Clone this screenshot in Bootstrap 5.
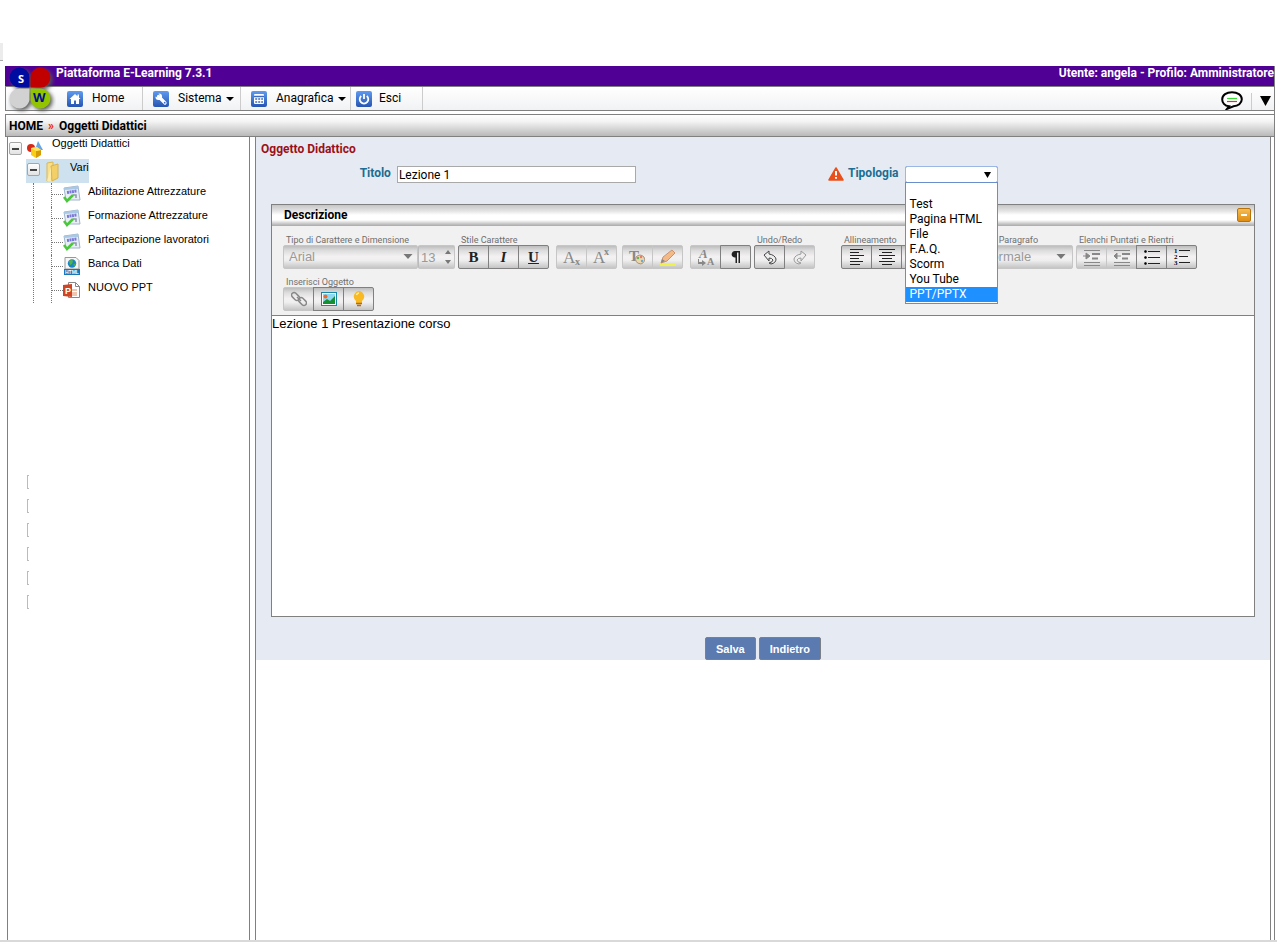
<!DOCTYPE html>
<html lang="it">
<head>
<meta charset="utf-8">
<meta name="viewport" content="width=device-width, initial-scale=1">
<title>Piattaforma E-Learning 7.3.1</title>
<link href="https://cdn.jsdelivr.net/npm/bootstrap@5.3.0/dist/css/bootstrap.min.css" rel="stylesheet">
<style>
:root{--line:#808080;--arial:"Liberation Sans",Arial,sans-serif}
body{font-family:Roboto,"Liberation Sans",sans-serif;font-size:12px;line-height:16px;color:#000;background:#fff}
a{color:inherit;text-decoration:none}
svg{display:block;flex:none}
.topspace{height:66px;padding-top:43px}
.tabstub{width:3px;height:18px;background:#ececec;border-bottom:1px solid #aaa}
.app{margin:0 2px 0 5px;border-right:1px solid var(--line)}
.brandbar{height:21px;background:#500094;color:#fff;border-bottom:1px solid var(--line);padding-left:51px;line-height:14px}
.logo{position:absolute;left:3px;top:0}
.menubar{height:24px;background:linear-gradient(#fff,#f1f2f4);border-left:1px solid var(--line);border-bottom:1px solid var(--line);padding-left:51px}
.menubar .entry{border-right:1px solid #ccc;padding-left:10px;gap:9px;white-space:nowrap}
.w-home{width:86px}.w-sist{width:98px}.w-anag{width:110px}
.menubar .w-esci{width:72px;padding-left:5px;gap:7px}
.entry span{padding-bottom:2px}
.drop::after{content:"";display:inline-block;border:4px solid transparent;border-top-color:#000;border-bottom:0;margin-left:4px;vertical-align:1px}
.tools{gap:8px;padding-right:3px}
.tools .bar{width:1px;height:17px;background:#ccc}
.plain{border:0;background:none;padding:0}
.crumbs{margin-top:3px;height:23px;border:1px solid var(--line);border-right:0;background:linear-gradient(#fff,#f4f4f4 30%,#b9b9b9);padding-left:3px;gap:5px;line-height:22px}
.crumbs .sep{color:#f01818}
.tree{width:243px;margin-left:2px;border:solid var(--line);border-width:0 1px;font-family:var(--arial);font-size:11px}
.node{height:24px;white-space:nowrap}
.node.first{height:22px;margin-left:1px}
.node.first>*{margin-top:-2px}
.picked{background:#cde1ef;margin-left:18px;padding-left:1px;width:63px}
.picked .knob{padding-bottom:7px}
.toggle{width:13px;height:13px;border:1px solid #a6a6a6;border-radius:2px;background:linear-gradient(#fff,#e2e2e2);padding:0}
.toggle::before{content:"";display:block;width:7px;height:2px;background:#444;margin:0 auto}
.pic{margin:0 7px 0 4px}
.leaf{padding-left:25px}
.guide{width:18px;border-left:1px dotted #777}
.stub{width:12px;border-left:1px dotted #777}
.stub::after{content:"";display:block;margin-top:11px;border-top:1px dotted #777}
.leaf svg{margin:2px 7px 0 0}
.ticks{margin-top:172px;padding-left:19px}
.tick{height:14px;width:2px;margin-bottom:10px;border:1px solid #bbb;border-right:0}
.work{margin:0 3px 0 5px;border:solid var(--line);border-width:0 1px}
.form-zone{background:#e6ebf3}
.form-zone h1{font-size:12px;line-height:16px;color:#9c1018;padding:4px 0 0 5px}
.fields{padding-top:9px;height:47px}
.fields label{color:#1b6d92;line-height:15px}
.fields .cap{width:27%;padding-right:2px}
.txt{width:239px;height:17px;border:1px solid #a9a9a9;padding:0 1px;font-size:12px;line-height:15px;color:#000;border-radius:0}
.kind{padding-left:65px}
.kind label{margin:0 6px 0 4px}
.picker{width:93px}
.picker select{appearance:none;width:100%;height:17px;border:1px solid #6a8ecb;border-radius:2px;outline:1px solid #9bb8e5;outline-offset:-1px;background:#fff}
.picker>svg{position:absolute;right:7px;top:6px;pointer-events:none}
.choices{position:absolute;left:0;right:0;top:16px;z-index:5;background:#fff;border:1px solid #6a8ecb;margin:0;padding:0 0 1px;list-style:none}
.choices li{height:15px;line-height:14px;padding-left:4px}
.choices li:first-child{height:14px}
.choices .on{background:#1e90ff;color:#fff}
.editor{margin:0 15px;border:1px solid var(--line)}
.ed-head{height:21px;background:linear-gradient(#c6c6c6,#e4e4e4 30%,#fff 50%,#fff 75%,#b5b5b5);border-bottom:1px solid #b0b0b0;padding:0 3px 0 12px}
.min{width:14px;height:14px;border:1px solid #b8720a;border-radius:2px;background:linear-gradient(#f6bd55,#e08e10);padding:0}
.min::before{content:"";display:block;width:6px;height:2px;background:#fff;margin:0 auto}
.kit{background:#f1f1f1;border-bottom:1px solid var(--line);padding:9px 4px 4px 11px;column-gap:3px;row-gap:8px}
.cap9{font-size:9px;line-height:10px;color:#6e6e6e;padding-left:3px;white-space:nowrap}
.tb,.fake,.size{height:24px;border:1px solid var(--line);background:linear-gradient(#bdbdbd,#dedede 22%,#f4f1f2 48%,#efefef 65%,#c4c4c4)}
.tb{width:31px;padding:0;margin-right:-1px;display:flex;align-items:center;justify-content:center;position:relative;color:#222}
.tb:not(:disabled){z-index:1}
.tb:first-child{border-radius:2px 0 0 2px}.tb:last-child{border-radius:0 2px 2px 0;margin-right:0}
.tb:disabled{border-color:#c6c6c6;color:#8b8b8b}
.tb,.tb text{font-family:"Liberation Serif",serif}
.tb b,.tb i,.tb u{font-size:15px;font-weight:bold;line-height:20px}
.fake,.size{border-color:#c6c6c6;font-family:var(--arial);font-size:13px;color:#999;opacity:1;appearance:none;border-radius:2px}
.fake{padding:0 5px}
.size{width:37px;padding:0 2px;border-left-color:#bbb}
.w-font{width:135px}.w-par{width:97px}
.arrow{position:absolute;right:5px;top:9px}
.sp-s{margin-left:2px}.sp-m{margin-left:11px}.sp-l{margin-left:23px}
.body-text{display:block;width:100%;height:300px;border:0;padding:0;resize:none;font-family:var(--arial);font-size:13px;line-height:16px;color:#000}
.actions{padding-top:20px;gap:3px}
.act{height:23px;border:1px solid #7c7f86;border-radius:2px;background:#5b7ab0;color:#fff;font-family:var(--arial);font-size:11px;line-height:20px;font-weight:bold;padding:0 10px}
.foot{height:4px;border-top:2px solid #d9d9d9}
</style>
</head>
<body class="min-vh-100 d-flex flex-column">
<svg width="0" height="0" class="position-absolute" aria-hidden="true">
<defs>
<linearGradient id="blue" x2="0" y2="1"><stop stop-color="#5f9bf0"/><stop offset="1" stop-color="#2754b0"/></linearGradient>
<symbol id="scorm" viewBox="0 0 18 18"><path d="M1 3 15 1 17 15 3 15Z" fill="#e7eef6" stroke="#9fb6cc"/><path d="M1 3 15 1 15.500 4 1.500 5Z" fill="#a9c8e4"/><path d="M4 7.500 14 6" stroke="#7a78d8" stroke-width="3" stroke-dasharray="2 .5"/><path d="M10 10h3v3" fill="none" stroke="#8a98a8" stroke-width="1.500"/><path d="m1 12 3 4 6-6" fill="none" stroke="#4cc63c" stroke-width="2.500"/></symbol>
<symbol id="down" viewBox="0 0 9 5"><path d="M0 0h9L4.500 5Z"/></symbol>
</defs></svg>

<div class="topspace"><div class="tabstub"></div></div>
<div class="app flex-grow-1 d-flex flex-column">
<header class="position-relative">
<div class="brandbar d-flex justify-content-between fw-bold"><span>Piattaforma E-Learning 7.3.1</span><span>Utente: angela - Profilo: Amministratore</span></div>
<a href="#" class="logo" aria-label="SW"><svg width="48" height="48" viewBox="0 0 48 48"><g style="filter:drop-shadow(2px 2px 2px #555)">
<path d="M21.500 21.500h-9a10 10 0 1 1 9-10Z" fill="#000ca0"/><path d="M22.500 21.500v-9a10 10 0 1 1 10 9Z" fill="#c00000"/>
<path d="M21.500 22.500v9a10 10 0 1 1-9-9Z" fill="#d2d2d2"/><path d="M22.500 22.500h9a10 10 0 1 1-9 9Z" fill="#93c400"/></g>
<text x="10" y="17" font-size="11" font-weight="bold" fill="#fff" font-family="Open Sans,sans-serif">S</text><text x="25" y="36" font-size="13" font-weight="bold" fill="#00108c" font-family="Open Sans,sans-serif">W</text></svg></a>
<nav class="menubar d-flex">
<a href="#" class="entry w-home d-flex align-items-center"><svg width="16" height="16" viewBox="0 0 16 16"><rect width="16" height="16" rx="2" fill="url(#blue)"/><path d="M2.500 8 8 3l2.500 2.200V3.500H12v3L13.500 8H12v5H9V9.500H7V13H4V8Z" fill="#fff"/></svg><span>Home</span></a>
<a href="#" class="entry w-sist d-flex align-items-center"><svg width="16" height="16" viewBox="0 0 16 16"><rect width="16" height="16" rx="2" fill="url(#blue)"/><path d="M5.500 5.500 12 12" stroke="#fff" stroke-width="3.200" stroke-linecap="round"/><path d="M2.500 5.500a3.300 3.300 0 1 0 3-3l1.500 2-.5 1.500-2 .5Z" fill="#fff"/><circle cx="11.700" cy="11.700" r=".9" fill="#3867c0"/></svg><span class="drop">Sistema</span></a>
<a href="#" class="entry w-anag d-flex align-items-center"><svg width="16" height="16" viewBox="0 0 16 16"><rect width="16" height="16" rx="2" fill="url(#blue)"/><rect x="3" y="3" width="10" height="10" rx="1" fill="#fff"/><path d="M3 5.500h10M4.200 8h2M7.200 8h2M10.200 8h1.800M4.200 11h2M7.200 11h2M10.200 11h1.800" stroke="#3b6ac4" stroke-width="1.400"/></svg><span class="drop">Anagrafica</span></a>
<a href="#" class="entry w-esci d-flex align-items-center"><svg width="16" height="16" viewBox="0 0 16 16"><rect width="16" height="16" rx="2" fill="url(#blue)"/><path d="M5.200 5a4.300 4.300 0 1 0 5.600 0M8 3v5" fill="none" stroke="#fff" stroke-width="1.800"/></svg><span>Esci</span></a>
<div class="tools ms-auto d-flex align-items-end">
<button class="plain" aria-label="Messaggi"><svg width="22" height="19" viewBox="0 0 22 19"><path d="M8 15.300C3.500 15 1.200 11.500 1.200 8.500 1.200 4 5.500 1.200 11 1.200S20.800 4 20.800 8.300c0 4-3.800 6.700-8.300 7L6 17.900Z" fill="#fff" stroke="#000" stroke-width="2"/><path d="M6 7.500h10" stroke="#3d3" stroke-width="1.200"/><path d="M6 10.500h10" stroke="#d33" stroke-width="1.200"/></svg></button>
<span class="bar"></span>
<button class="plain pb-1" aria-label="Apri menu"><svg width="11" height="10"><path d="M0 0h11L5.500 10Z"/></svg></button>
</div>
</nav>
</header>
<div class="crumbs d-flex fw-bold"><a href="#">HOME</a><span class="sep">»</span><span>Oggetti Didattici</span></div>
<div class="d-flex flex-grow-1">
<aside class="tree flex-shrink-0">
<div class="node first d-flex"><span class="d-flex align-items-end pb-1"><button class="toggle" aria-label="Comprimi Oggetti Didattici"></button></span>
<span class="pic d-flex align-items-end"><svg width="19" height="19" viewBox="0 0 19 19"><path d="M12 1 17 10H9Z" fill="#65a5e8"/><circle cx="5" cy="8" r="4" fill="#d62a16"/><path d="m5 8 6-1 4 3v5l-5 3-5-3Z" fill="#f8cd17"/><path d="m10 11 5-1v5l-5 3Z" fill="#d59a05"/><path d="m5 8 5 3 5-1-4-3Z" fill="#ffe663"/></svg></span><a href="#">Oggetti Didattici</a></div>
<div class="node picked d-flex"><span class="knob d-flex align-items-end"><button class="toggle" aria-label="Comprimi Vari"></button></span>
<span class="pic d-flex align-items-end"><svg width="19" height="22" viewBox="0 0 19 22"><path d="M3 2 9 1v16l-6 3Z" fill="#f8df8c" stroke="#dcb84e"/><path d="M7 5 14 3v14l-6 3Z" fill="#f3cf68" stroke="#dbb24a"/><path d="M3 20 7 6v14Z" fill="#fdeba9"/></svg></span><a href="#">Vari</a></div>
<div class="node leaf d-flex"><i class="guide"></i><i class="stub"></i><svg width="18" height="18"><use href="#scorm"/></svg><a href="#">Abilitazione Attrezzature</a></div>
<div class="node leaf d-flex"><i class="guide"></i><i class="stub"></i><svg width="18" height="18"><use href="#scorm"/></svg><a href="#">Formazione Attrezzature</a></div>
<div class="node leaf d-flex"><i class="guide"></i><i class="stub"></i><svg width="18" height="18"><use href="#scorm"/></svg><a href="#">Partecipazione lavoratori</a></div>
<div class="node leaf d-flex"><i class="guide"></i><i class="stub"></i><svg width="18" height="18" viewBox="0 0 18 18"><path d="M2 .5h11l3 3V12H2Z" fill="#f7f7f7" stroke="#999"/><circle cx="9" cy="6.500" r="4.200" fill="#1a86c8"/><path d="M6 4q3-2 4 0l-1 3-2 1ZM10 8l3-2-1 3Z" fill="#57b53b"/><path d="M1 12h16v6H1Z" fill="#1976b9"/><text x="2" y="17" font-size="5" font-weight="bold" fill="#fff">HTML</text></svg><a href="#">Banca Dati</a></div>
<div class="node leaf d-flex"><i class="guide"></i><i class="stub"></i><svg width="18" height="18" viewBox="0 0 18 18"><path d="M5.500 1.500h7l4 4v11h-11Z" fill="#fff" stroke="#888"/><path d="M12.500 1.500v4h4" fill="none" stroke="#888"/><path d="M9 9h5M9 12h5M9 14h5" stroke="#e08a64"/><path d="M0 4 9 3v13l-9-1Z" fill="#d04423"/><text x="2" y="13" font-size="9" font-weight="bold" fill="#fff">P</text></svg><a href="#">NUOVO PPT</a></div>
<div class="ticks"><div class="tick"></div><div class="tick"></div><div class="tick"></div><div class="tick"></div><div class="tick"></div><div class="tick"></div></div>
</aside>
<main class="work flex-grow-1">
<form class="form-zone" onsubmit="return false">
<h1 class="fw-bold m-0">Oggetto Didattico</h1>
<div class="fields d-flex">
<div class="w-50 d-flex"><label for="titolo" class="cap fw-bold text-end me-1">Titolo</label><input id="titolo" class="txt" value="Lezione 1"></div>
<div class="w-50 kind d-flex"><svg width="16" height="15" viewBox="0 0 16 15"><path d="M8 2 15 14H1Z" fill="#e8501c" stroke="#e8501c" stroke-width="1.500" stroke-linejoin="round"/><path d="M8 5v4.500M8 11v1.700" stroke="#fff" stroke-width="2"/></svg><label for="tipologia" class="fw-bold">Tipologia</label>
<div class="picker position-relative"><select id="tipologia"><option></option></select><svg width="7" height="6"><path d="M0 0h7L3.500 6Z"/></svg>
<ul class="choices" role="listbox" aria-label="Tipologia"><li role="option"></li><li role="option">Test</li><li role="option">Pagina HTML</li><li role="option">File</li><li role="option">F.A.Q.</li><li role="option">Scorm</li><li role="option">You Tube</li><li role="option" class="on" aria-selected="true">PPT/PPTX</li></ul></div></div>
</div>
<section class="editor">
<div class="ed-head d-flex align-items-center justify-content-between fw-bold"><span>Descrizione</span><button class="min" aria-label="Riduci"></button></div>
<div class="kit d-flex flex-wrap align-items-end">
<div><div class="cap9">Tipo di Carattere e Dimensione</div><div class="d-flex"><div class="position-relative"><select class="fake w-font" disabled aria-label="Carattere"><option>Arial</option></select><svg class="arrow" width="10" height="5" fill="#777"><use href="#down"/></svg></div><div class="position-relative"><input class="size" value="13" disabled aria-label="Dimensione"><svg class="position-absolute end-0 top-0" style="margin:5px 2px" width="9" height="14" fill="#777"><path d="M1 4h6L4 0ZM1 10h6l-3 4Z"/></svg></div></div></div>
<div><div class="cap9">Stile Carattere</div><div class="d-flex"><button class="tb" aria-label="Grassetto"><b>B</b></button><button class="tb" aria-label="Corsivo"><i>I</i></button><button class="tb" aria-label="Sottolineato"><u>U</u></button></div></div>
<div class="ms-1 d-flex"><button class="tb" disabled aria-label="Pedice"><svg width="20" height="20" fill="#888"><text x="1" y="16" font-size="17">A</text><text x="13" y="18" font-size="10" font-weight="bold">x</text></svg></button><button class="tb" disabled aria-label="Apice"><svg width="20" height="20" fill="#888"><text x="1" y="16" font-size="17">A</text><text x="12" y="8" font-size="10" font-weight="bold">x</text></svg></button></div>
<div class="sp-s d-flex"><button class="tb" disabled aria-label="Colore testo"><svg width="20" height="20"><text x="1" y="14" font-size="15" font-weight="bold" fill="#888">T</text><path d="M8 10q4-4 8 0 2 5-3 7-7-1-5-7Z" fill="#edd6ad" stroke="#a8937a"/><circle cx="10" cy="11" r="1.200" fill="#5b5"/><circle cx="13" cy="10" r="1.200" fill="#e76"/><circle cx="14" cy="14" r="1.200" fill="#6ad"/></svg></button><button class="tb" disabled aria-label="Evidenziatore"><svg width="20" height="20"><path d="M2 18h16" stroke="#eef04d" stroke-width="2"/><path d="m3 16 2-6 9-7 3 3-8 8Z" fill="#f3b987" stroke="#c89370"/><path d="m3 16 1-4 3 2Z" fill="#888"/></svg></button></div>
<div class="ms-1 d-flex"><button class="tb" disabled aria-label="Rimuovi formato"><svg width="20" height="20" fill="#888"><text x="3" y="11" font-size="13" font-weight="bold" font-style="italic">A</text><text x="11" y="18" font-size="10" font-weight="bold">A</text><path d="M3 12v3h3v-2l4 3-4 3v-2H2v-5Z"/></svg></button><button class="tb" aria-label="Paragrafo"><svg width="12" height="14"><path d="M10 1v12H8.500V2.500H7V13H5.500V7.500a3.300 3.300 0 1 1 0-6.500Z" fill="#222"/></svg></button></div>
<div><div class="cap9">Undo/Redo</div><div class="d-flex"><button class="tb" aria-label="Annulla"><svg width="14" height="15" viewBox="0 0 14 15"><path d="m1 5 5-4v3q6 1 7 5 0 4-5 5l-2-1q4-1 4-3-1-2-4-2v3Z" fill="#eee" stroke="#444"/></svg></button><button class="tb" disabled aria-label="Ripeti"><svg width="14" height="15" viewBox="0 0 14 15"><path d="m13 5-5-4v3q-6 1-7 5 0 4 5 5l2-1q-4-1-4-3 1-2 4-2v3Z" fill="#eee" stroke="#999"/></svg></button></div></div>
<div class="sp-l"><div class="cap9">Allineamento</div><div class="d-flex"><button class="tb" aria-label="Sinistra"><svg width="16" height="18" stroke="#222"><path d="M1 1.500h13M1 4.500h9M1 7.500h14M1 10.500h9M1 13.500h13M1 16.500h10"/></svg></button><button class="tb" aria-label="Centro"><svg width="16" height="18" stroke="#222"><path d="M0 1.500h16M3 4.500h10M0 7.500h16M3 10.500h10M0 13.500h16M3 16.500h10"/></svg></button><button class="tb" aria-label="Destra"><svg width="16" height="18" stroke="#222"><path d="M2 1.500h13M6 4.500h9M1 7.500h14M6 10.500h9M2 13.500h13M5 16.500h10"/></svg></button><button class="tb" aria-label="Giustificato"><svg width="16" height="18" stroke="#222"><path d="M0 1.500h16M0 4.500h16M0 7.500h16M0 10.500h16M0 13.500h16M0 16.500h16"/></svg></button></div></div>
<div class="sp-m"><div class="cap9">Stile Paragrafo</div><div class="position-relative"><select class="fake w-par" disabled aria-label="Stile Paragrafo"><option>Normale</option></select><svg class="arrow" style="right:7px" width="10" height="5" fill="#777"><use href="#down"/></svg></div></div>
<div><div class="cap9">Elenchi Puntati e Rientri</div><div class="d-flex"><button class="tb" disabled aria-label="Aumenta rientro"><svg width="18" height="17" fill="none" stroke="#888"><path d="M1 1.500h16M1 13.500h16M1 16.500h16"/><path d="M9 5h8M9 9.500h6" stroke-width="2"/><path d="M0 7h3V4l4 3-4 3V7" fill="#888"/></svg></button><button class="tb" disabled aria-label="Riduci rientro"><svg width="18" height="17" fill="none" stroke="#888"><path d="M1 1.500h16M1 13.500h16M1 16.500h16"/><path d="M9 5h8M9 9.500h6" stroke-width="2"/><path d="M8 7H4V4L1 7l3 3V7" fill="#888"/></svg></button><button class="tb" aria-label="Elenco puntato"><svg width="18" height="17" stroke="#222"><path d="M5 2.500h12M5 8.500h12M5 14.500h12"/><circle cx="2.500" cy="2.500" r="1"/><circle cx="2.500" cy="8.500" r="1"/><circle cx="2.500" cy="14.500" r="1"/></svg></button><button class="tb" aria-label="Elenco numerato"><svg width="18" height="20"><path d="M6 3.500h11M6 9.500h9M6 15.500h11" stroke="#222"/><text x="1" y="6" font-size="7" font-weight="bold">1</text><text x="1" y="12" font-size="7" font-weight="bold">2</text><text x="1" y="18" font-size="7" font-weight="bold">3</text></svg></button></div></div>
<div><div class="cap9">Inserisci Oggetto</div><div class="d-flex"><button class="tb" disabled aria-label="Collegamento"><svg width="16" height="16" fill="none" stroke="#888" stroke-width="1.500"><rect x="0" y="3" width="9" height="5" rx="2.500" transform="rotate(45 4.500 5.500)"/><rect x="7" y="8" width="9" height="5" rx="2.500" transform="rotate(45 11.500 10.500)"/><path d="m6 6 4 4"/></svg></button><button class="tb" aria-label="Immagine"><svg width="16" height="14"><rect x=".5" y=".5" width="15" height="13" fill="#fff" stroke="#1688a8"/><path d="M2 2h12v10H2Z" fill="#8fd8f4"/><path d="m2 10 4-3 3 2 5-5v8H2Z" fill="#159030"/><circle cx="4.500" cy="4.500" r="2" fill="#f26a21"/></svg></button><button class="tb" aria-label="Suggerimento"><svg width="12" height="16"><path d="M3 10Q0 7 1 4q2-4 5-4t5 4q1 3-2 6v2H3Z" fill="#f8b922"/><path d="M3.500 4Q4 2 6 2" stroke="#fff3a8" stroke-width="1.500" fill="none"/><path d="M3 12.500h6M4 14.500h4" stroke="#b86c10" stroke-width="1.500"/></svg></button></div></div>
</div>
<textarea class="body-text" aria-label="Descrizione">Lezione 1 Presentazione corso</textarea>
</section>
<div class="actions d-flex justify-content-center"><button class="act">Salva</button><button class="act">Indietro</button></div>
</form>
</main>
</div>
</div>
<div class="foot"></div>
<script src="https://cdn.jsdelivr.net/npm/bootstrap@5.3.0/dist/js/bootstrap.bundle.min.js"></script>
</body>
</html>
